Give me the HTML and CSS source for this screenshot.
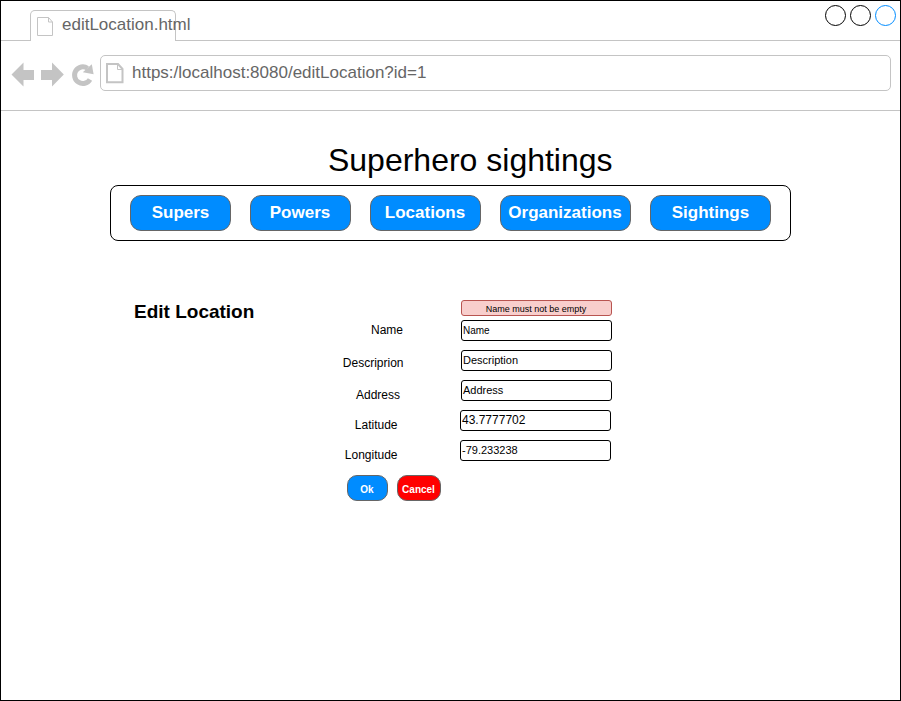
FILE: index.html
```html
<!DOCTYPE html>
<html lang="en">
<head>
<meta charset="utf-8">
<title>editLocation.html</title>
<link rel="stylesheet" href="styles.css">
</head>
<body>
<div class="window">
  <header class="tabstrip">
    <div class="tab">
      <svg class="tab-icon" width="17" height="20" viewBox="0 0 17 20"><path d="M.5.5h11l4 4.500v13.500h-15zM11.500.5v4.500h4"/></svg>
      <span class="tab-title">editLocation.html</span>
    </div>
    <svg class="controls" width="74" height="22" viewBox="0 0 74 22"><circle cx="11.500" cy="11.500" r="10"/><circle cx="36.500" cy="11.500" r="10"/><circle class="active" cx="61.500" cy="11.500" r="10"/></svg>
  </header>
  <div class="toolbar">
    <svg class="nav-icons" width="84" height="28" viewBox="0 0 84 28"><path d="M.5 13.500 12.500 1.500V9H23V19H12.500V25.500zM30 9H41V1.500L52.800 13.500 41 25.500V19H30z"/><path class="reload" d="M79 18.400A8.300 8.300 0 1 1 76.500 7.300"/><path d="M80.800 3.200 82.600 13.300 71.800 11.200z"/></svg>
    <div class="address">
      <svg class="page-icon" width="20" height="22" viewBox="0 0 20 22"><path d="M2 2h11l4.500 5v13.300H2z"/><path class="fold" d="M12.500 2v5.500h5"/></svg>
      <span>https:/localhost:8080/editLocation?id=1</span>
    </div>
  </div>
  <main>
    <h1>Superhero sightings</h1>
    <nav>
      <a class="w-100">Supers</a><a class="w-100 nudge">Powers</a><a class="w-110 nudge">Locations</a><a class="w-130 nudge">Organizations</a><a class="w-120">Sightings</a>
    </nav>
    <section class="editor">
      <h2>Edit Location</h2>
      <form>
        <div class="error">Name must not be empty</div>
        <div class="row"><label class="name">Name</label><div class="field small">Name</div></div>
        <div class="row"><label class="description">Descriprion</label><div class="field">Description</div></div>
        <div class="row"><label class="addr">Address</label><div class="field">Address</div></div>
        <div class="row coord"><label>Latitude</label><div class="field large">43.7777702</div></div>
        <div class="row coord"><label>Longitude</label><div class="field">-79.233238</div></div>
        <div class="actions"><div class="btn ok">Ok</div><div class="btn cancel">Cancel</div></div>
      </form>
    </section>
  </main>
</div>
</body>
</html>
```
FILE: styles.css
```css
* { box-sizing: border-box; }
body { margin: 0; background: #fff; color: #000; font-family: "Liberation Sans", Arial, sans-serif; }
svg { display: block; fill: none; stroke: #c4c4c4; }

.window { width: 901px; height: 701px; border: 1px solid #000; overflow: hidden; }

.tabstrip { display: flex; justify-content: space-between; height: 40px; padding: 9px 0 0 29px; border-bottom: 1px solid #c4c4c4; }
.tab { display: flex; width: 146px; height: 31px; padding-left: 6px; background: #fff; border: 1px solid #c4c4c4; border-bottom: 0; border-radius: 5px 5px 0 0; white-space: nowrap; }
.tab-icon { flex: none; margin-top: 6px; }
.tab-title { margin-left: 8px; font-size: 17px; line-height: 28px; color: #666; }
.controls { margin: -6px 2px 0 0; stroke: #000; }
.controls .active { stroke: #008cff; }

.toolbar { display: flex; height: 70px; padding: 14px 9px 0 10px; border-bottom: 1px solid #c4c4c4; }
.nav-icons { margin-top: 6px; fill: #c4c4c4; stroke: none; }
.nav-icons .reload { fill: none; stroke: #c4c4c4; stroke-width: 5; }
.address { display: flex; flex: 1; height: 36px; margin-left: 5px; padding-left: 5px; border: 1px solid #c4c4c4; border-radius: 5px; font-size: 17px; line-height: 34px; color: #666; }
.page-icon { margin: 6px 7px 0 -1px; stroke-width: 2; }
.page-icon .fold { stroke-width: 1; }

h1 { margin: 30px 0 0 39.5px; font-size: 32px; font-weight: 400; line-height: 38px; text-align: center; }
nav { display: flex; gap: 19px; width: 681px; height: 56px; margin: 6px 0 0 109px; padding: 9px 0 0 19px; border: 1px solid #000; border-radius: 8px; }
nav a { height: 36px; background: #008cff; border: 1px solid #666; border-radius: 11px; color: #fff; font-size: 17px; font-weight: 700; line-height: 34px; text-align: center; }
.nudge { padding-right: 1px; }
.w-100 { width: 101px; }
.w-110 { width: 111px; }
.w-120 { width: 121px; }
.w-130 { width: 131px; }

.editor { display: flex; margin: 59px 0 0 133px; }
h2 { width: 208px; margin: 0; font-size: 19px; line-height: 23px; }
.error { width: 151px; height: 16px; margin: 0 0 4px 119px; padding-right: 1px; background: #f8cecc; border: 1px solid #b85450; border-radius: 3px; font-size: 9px; line-height: 16px; text-align: center; }
.row { display: flex; height: 21px; margin-bottom: 9px; font-size: 12px; }
.row label { width: 119px; padding-right: 58px; line-height: 21px; text-align: right; }
.row .description { padding-right: 57.5px; line-height: 27px; }
.row .addr { padding-right: 61px; line-height: 31px; }
.coord label { width: 118px; padding-right: 62.5px; line-height: 31px; }
.field { width: 151px; padding-left: 1px; border: 1px solid #000; border-radius: 3px; font-size: 11px; line-height: 19px; }
.field.small { font-size: 10px; }
.field.large { font-size: 12px; }
.actions { display: flex; gap: 9px; margin: 14px 0 0 5px; }
.btn { height: 26px; padding-right: 1px; border: 1px solid #666; border-radius: 10px; color: #fff; font-size: 10px; font-weight: 700; line-height: 27px; text-align: center; }
.ok { width: 41px; background: #008cff; }
.cancel { width: 44px; background: #f00; }
```
